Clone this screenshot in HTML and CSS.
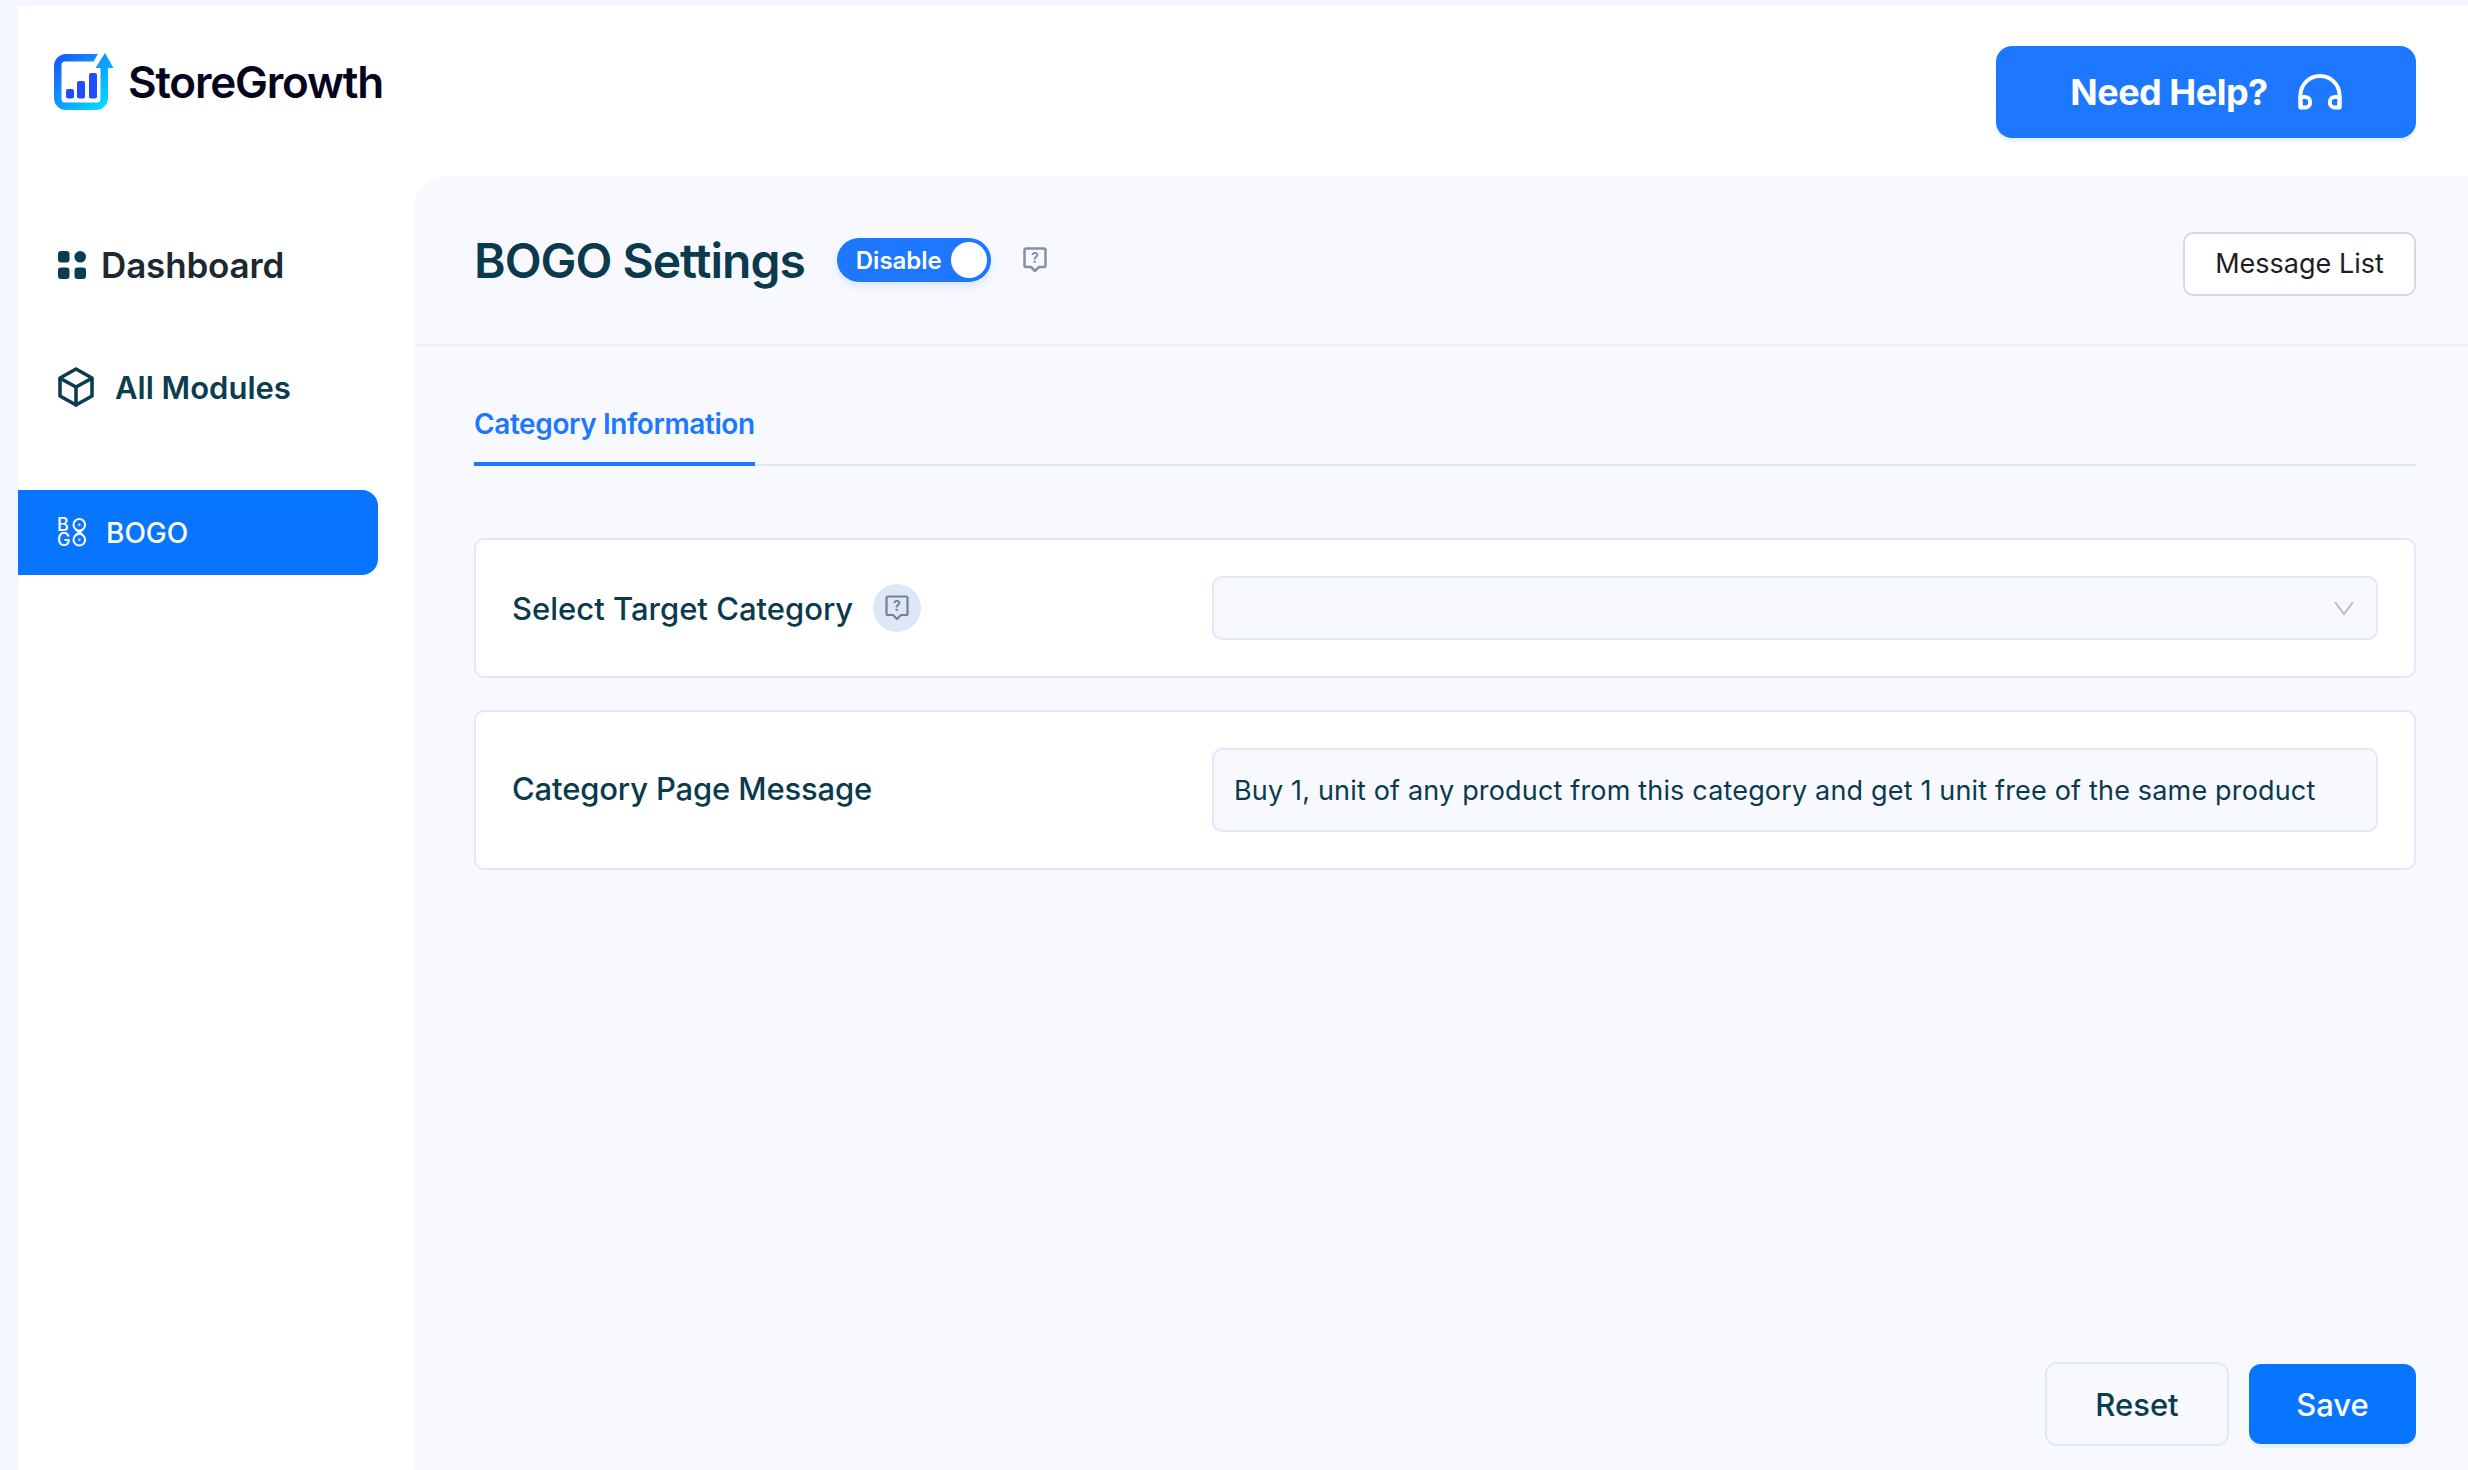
FILE: index.html
```html
<!DOCTYPE html>
<html lang="en">
<head>
<meta charset="utf-8">
<title>BOGO Settings</title>
<link rel="stylesheet" href="styles.css">
</head>
<body>
<div class="shell">
  <header class="topbar">
    <div class="brand">
      <svg class="brand-mark" viewBox="0 0 60 58" width="60" height="58">
        <defs>
          <linearGradient id="lg" gradientUnits="userSpaceOnUse" x1="4" y1="4" x2="54" y2="57">
            <stop offset="0" stop-color="#1c58ff"/>
            <stop offset="1" stop-color="#00e6ff"/>
          </linearGradient>
        </defs>
        <path fill="url(#lg)" d="M44 1H12A12 12 0 0 0 0 13V45A12 12 0 0 0 12 57H42A12 12 0 0 0 54 45V15H59.500L51 0L41.500 15H46.500V46A3.500 3.500 0 0 1 43 49.500H11A3.500 3.500 0 0 1 7.500 46V12A3.500 3.500 0 0 1 11 8.500H39.500Z"/>
        <rect x="12" y="36" width="8" height="9.500" rx="2" fill="#1f4dff"/>
        <rect x="23" y="28" width="8" height="17.500" rx="2" fill="#1f4dff"/>
        <rect x="35" y="20" width="8" height="25.500" rx="2" fill="#1f4dff"/>
      </svg>
      <span class="brand-name">StoreGrowth</span>
    </div>
    <button class="help-btn">
      <span>Need Help?</span>
      <svg viewBox="0 0 44 36" width="44" height="36" fill="none" stroke="#fff" stroke-width="4" stroke-linejoin="round" stroke-linecap="round">
        <path d="M2.500 33V21A19.500 19 0 0 1 41.500 21V33"/>
        <path d="M2.500 23H7A5 5 0 0 1 7 33.500H2.500Z"/>
        <path d="M41.500 23H37A5 5 0 0 0 37 33.500H41.500Z"/>
      </svg>
    </button>
  </header>

  <div class="body-row">
    <nav class="sidebar">
      <a class="nav-item nav-dash">
        <svg viewBox="0 0 28 28" width="28" height="28" fill="#0b3d50">
          <rect width="11.500" height="11.500" rx="3"/>
          <circle cx="22.200" cy="5.800" r="5.800"/>
          <rect y="16.500" width="11.500" height="11.500" rx="3"/>
          <rect x="16.500" y="16.500" width="11.500" height="11.500" rx="3"/>
        </svg>
        <span>Dashboard</span>
      </a>
      <a class="nav-item nav-mod">
        <svg viewBox="0 0 36 40" width="36" height="40" fill="none" stroke="#0b3d50" stroke-width="3.600" stroke-linejoin="round" stroke-linecap="round">
          <path d="M18 2L34 11V29L18 38L2 29V11Z"/>
          <path d="M2.500 11.500L18 20L33.500 11.500M18 20V38"/>
        </svg>
        <span>All Modules</span>
      </a>
      <a class="nav-item nav-active">
        <svg class="bogo-mark" viewBox="0 0 28 29" width="28" height="29">
          <text class="bogo-glyph" x="-1" y="13">B</text>
          <text class="bogo-glyph" x="-1" y="28">G</text>
          <circle cx="21.300" cy="6.800" r="5.800" fill="none" stroke="#fff" stroke-width="2"/>
          <circle cx="21.300" cy="21.800" r="5.800" fill="none" stroke="#fff" stroke-width="2"/>
          <path d="M17.500 11.500L25 17M25 11.500L17.500 17" fill="none" stroke="#fff" stroke-width="2"/>
          <circle cx="21.300" cy="6.800" r="1.400" fill="#fff" opacity=".75"/>
          <circle cx="21.300" cy="21.800" r="1.400" fill="#fff" opacity=".75"/>
        </svg>
        <span>BOGO</span>
      </a>
    </nav>

    <main class="main">
      <section class="page-head">
        <h1 class="page-title">BOGO Settings</h1>
        <div class="toggle">
          <span>Disable</span>
          <i class="knob"></i>
        </div>
        <svg class="help-icon" viewBox="0 0 24 26" width="24" height="26">
          <path d="M3 1.500H21A1.500 1.500 0 0 1 22.500 3V18.500A1.500 1.500 0 0 1 21 20H16L12 24L8 20H3A1.500 1.500 0 0 1 1.500 18.500V3A1.500 1.500 0 0 1 3 1.500Z" fill="none" stroke="#8390a8" stroke-width="2.500" stroke-linejoin="round"/>
          <text class="q-glyph" x="12" y="16" text-anchor="middle">?</text>
        </svg>
        <button class="list-btn">Message List</button>
      </section>

      <div class="tabs">
        <div class="tab">Category Information</div>
      </div>

      <section class="cards">
        <div class="card">
          <div class="label-wrap">
            <label class="field-label">Select Target Category</label>
            <span class="help-circle">
              <svg viewBox="0 0 24 26" width="24" height="26">
                <path d="M3 1.500H21A1.500 1.500 0 0 1 22.500 3V18.500A1.500 1.500 0 0 1 21 20H16L12 24L8 20H3A1.500 1.500 0 0 1 1.500 18.500V3A1.500 1.500 0 0 1 3 1.500Z" fill="none" stroke="#71809c" stroke-width="2.200" stroke-linejoin="round"/>
                <text class="q-glyph q-dark" x="12" y="16" text-anchor="middle">?</text>
              </svg>
            </span>
          </div>
          <div class="select">
            <svg viewBox="0 0 20 14" width="20" height="14" fill="none" stroke="#bbbcc0" stroke-width="2">
              <path d="M1 1L10 13L19 1"/>
            </svg>
          </div>
        </div>
        <div class="card">
          <label class="field-label field-label-msg">Category Page Message</label>
          <div class="input">Buy 1, unit of any product from this category and get 1 unit free of the same product</div>
        </div>
      </section>

      <footer class="actions">
        <button class="reset-btn">Reset</button>
        <button class="save-btn">Save</button>
      </footer>
    </main>
  </div>
</div>
</body>
</html>
```

FILE: styles.css
```css
* { box-sizing: border-box; }
html, body { height: 100%; margin: 0; }
body {
  background: #f4f7ff;
  padding: 6px 0 0 18px;
  font-family: "Inter", "Liberation Sans", sans-serif;
  color: #0b3a4d;
  overflow: hidden;
}
button { font-family: inherit; cursor: pointer; }
.shell {
  height: 100%;
  background: #fff;
  display: flex;
  flex-direction: column;
}
.topbar {
  height: 170px;
  flex: none;
  display: flex;
  justify-content: space-between;
  align-items: flex-start;
  padding: 40px 52px 0 36px;
}
.brand {
  display: flex;
  align-items: center;
  gap: 14px;
  margin-top: 7px;
}
.brand-name {
  font-size: 44px;
  font-weight: 600;
  letter-spacing: -1.200px;
  color: #05051e;
  line-height: 58px;
}
.help-btn {
  width: 420px;
  height: 92px;
  border: 0;
  border-radius: 16px;
  background: #1d78ff;
  box-shadow: 0 4px 0 #e9f2ff;
  color: #fff;
  font-size: 36px;
  font-weight: 700;
  letter-spacing: -0.500px;
  display: flex;
  align-items: center;
  justify-content: center;
  gap: 30px;
}
.body-row { flex: 1; display: flex; min-height: 0; }
.sidebar {
  width: 396px;
  flex: none;
  display: flex;
  flex-direction: column;
  padding-top: 50px;
}
.nav-item {
  display: flex;
  align-items: center;
  height: 80px;
  padding-left: 40px;
  color: #0b3d50;
  font-weight: 600;
  font-size: 31px;
}
.nav-dash {
  gap: 15px;
  font-size: 35px;
  letter-spacing: -0.150px;
  color: #1c2931;
  margin-bottom: 41px;
  padding-bottom: 2px;
}
.nav-mod { gap: 21px; margin-bottom: 63px; }
.nav-active {
  width: 360px;
  height: 85px;
  gap: 20px;
  background: #0875ff;
  border-radius: 0 16px 16px 0;
  color: #fff;
  font-size: 28px;
  font-weight: 500;
}
.bogo-mark { overflow: visible; }
.bogo-glyph {
  font-family: "Inter", "Liberation Sans", sans-serif;
  font-size: 18px;
  font-weight: 500;
  fill: #fff;
}
.main {
  flex: 1;
  min-width: 0;
  background: #f8f9fe;
  border-top-left-radius: 32px;
  display: flex;
  flex-direction: column;
}
.page-head {
  height: 170px;
  flex: none;
  display: flex;
  align-items: center;
  padding: 0 52px 0 60px;
  border-bottom: 2px solid #eef0f5;
}
.page-title {
  margin: 0;
  font-size: 48px;
  font-weight: 600;
  color: #0b3a4d;
  letter-spacing: -1px;
}
.toggle {
  margin-left: 32px;
  width: 154px;
  height: 44px;
  border-radius: 22px;
  background: #1d78ff;
  box-shadow: 0 4px 8px rgba(29, 120, 255, .15);
  color: #fff;
  font-size: 24px;
  font-weight: 600;
  display: flex;
  align-items: center;
  justify-content: space-between;
  padding: 0 4px 0 19px;
}
.knob {
  width: 36px;
  height: 36px;
  border-radius: 50%;
  background: #fff;
}
.help-icon { margin-left: 32px; }
.q-glyph {
  font-family: "Inter", "Liberation Sans", sans-serif;
  font-size: 14px;
  font-weight: 700;
  fill: #8390a8;
}
.q-dark { fill: #71809c; }
.list-btn {
  margin-left: auto;
  margin-top: 7px;
  width: 233px;
  height: 64px;
  background: #fff;
  border: 2px solid #d8d9de;
  border-radius: 10px;
  font-size: 27px;
  color: #1e1e1e;
  padding: 0;
}
.tabs {
  flex: none;
  margin: 0 52px 0 60px;
  padding-top: 61px;
  border-bottom: 2px solid #dfe7f5;
  display: flex;
}
.tab {
  height: 59px;
  margin-bottom: -2px;
  line-height: 34px;
  border-bottom: 4px solid #1d78ff;
  color: #1d78ff;
  font-size: 28px;
  font-weight: 600;
  letter-spacing: -0.400px;
}
.cards {
  flex: none;
  margin: 72px 52px 0 60px;
  display: flex;
  flex-direction: column;
  gap: 32px;
}
.card {
  display: flex;
  align-items: center;
  justify-content: space-between;
  background: #fff;
  border: 2px solid #e0e8f9;
  border-radius: 10px;
  padding: 36px;
}
.label-wrap { display: flex; align-items: center; gap: 20px; }
.field-label {
  font-size: 31px;
  font-weight: 500;
  color: #0b3a4d;
}
.field-label-msg { letter-spacing: -0.150px; margin-bottom: 3px; }
.help-circle {
  width: 48px;
  height: 48px;
  border-radius: 50%;
  background: #dfe6f5;
  display: flex;
  align-items: center;
  justify-content: center;
}
.select, .input {
  width: 1166px;
  background: #f8f9fe;
  border: 2px solid #e0e8f9;
  border-radius: 10px;
  display: flex;
  align-items: center;
}
.select { height: 64px; justify-content: flex-end; padding-right: 22px; }
.input {
  height: 84px;
  padding-left: 20px;
  font-size: 27px;
  letter-spacing: 0.170px;
  color: #0b3a4d;
  white-space: nowrap;
}
.actions {
  margin-top: auto;
  padding: 0 52px 24px 0;
  display: flex;
  justify-content: flex-end;
  align-items: center;
  gap: 20px;
}
.reset-btn {
  width: 184px;
  height: 84px;
  background: #f8f9fe;
  border: 2px solid #e0e8f9;
  border-radius: 12px;
  font-size: 31px;
  font-weight: 500;
  color: #0b3d50;
}
.save-btn {
  width: 167px;
  height: 80px;
  background: #0875ff;
  border: 0;
  border-radius: 12px;
  box-shadow: 0 4px 0 #e6f0ff;
  font-size: 31px;
  font-weight: 500;
  color: #fff;
}
```
